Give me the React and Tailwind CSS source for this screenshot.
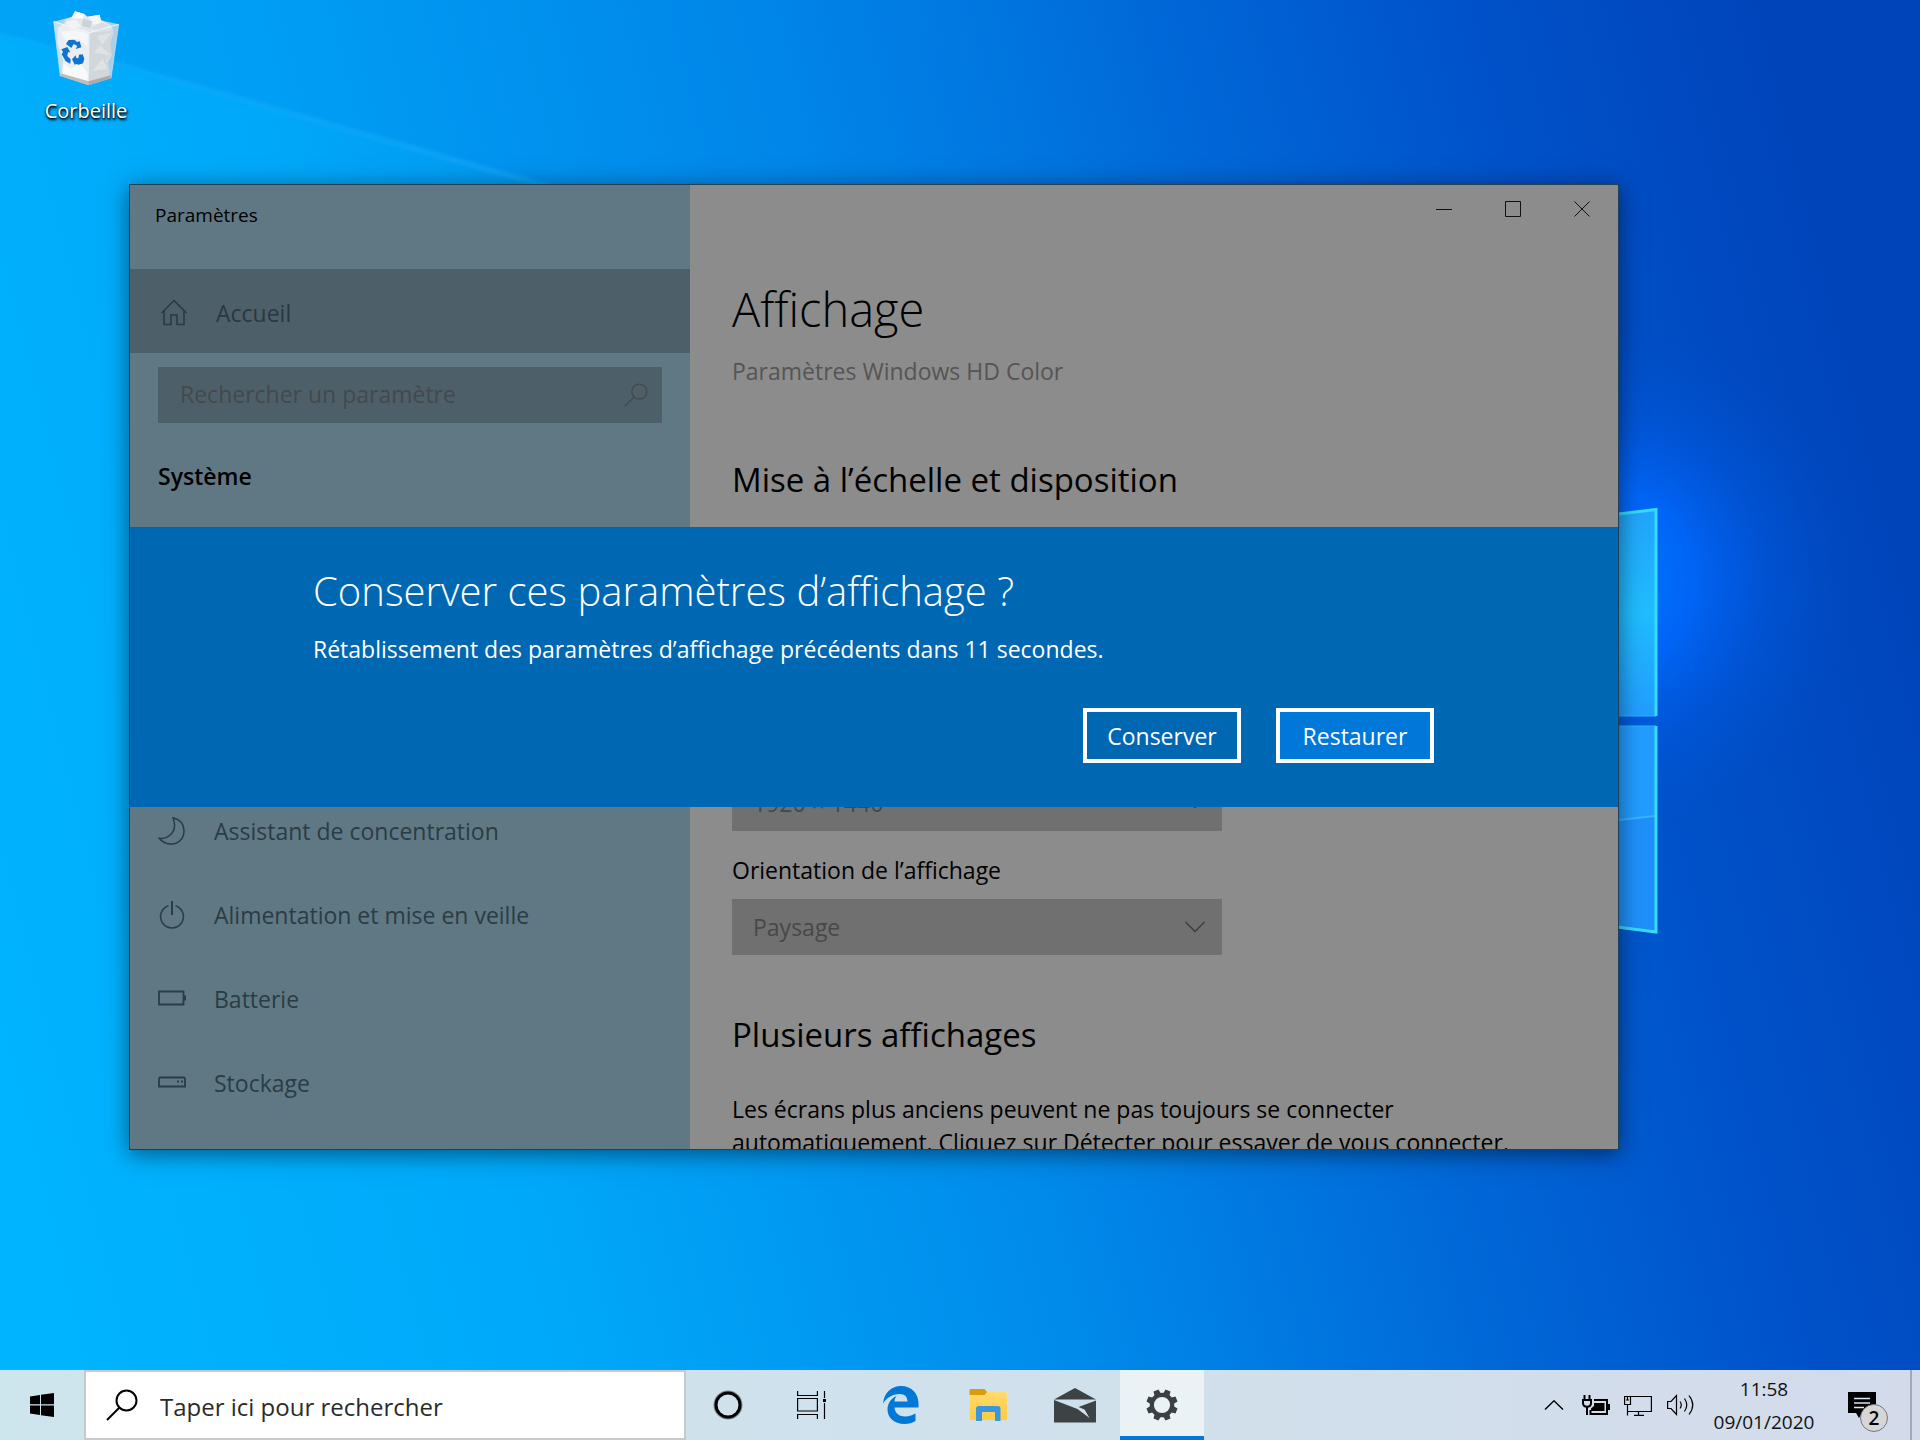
import React from 'react';

const navItems = [
  { label: 'Assistant de concentration', icon: MoonIcon },
  { label: 'Alimentation et mise en veille', icon: PowerIcon },
  { label: 'Batterie', icon: BatteryIcon },
  { label: 'Stockage', icon: StorageIcon },
];

function Wallpaper() {
  return (
    <svg
      className="absolute inset-0 h-full w-full"
      viewBox="0 0 1920 1440"
      preserveAspectRatio="xMaxYMid slice"
      aria-hidden="true"
    >
      <defs>
        <linearGradient id="base" x1="0" y1="1100" x2="1920" y2="620" gradientUnits="userSpaceOnUse">
          <stop offset="0" stopColor="#00b4ff" />
          <stop offset="0.25" stopColor="#00a8f9" />
          <stop offset="0.5" stopColor="#008aea" />
          <stop offset="0.7" stopColor="#0068d8" />
          <stop offset="0.85" stopColor="#0052ca" />
          <stop offset="1" stopColor="#0044ba" />
        </linearGradient>
        <radialGradient id="glow" cx="1600" cy="580" r="260" gradientUnits="userSpaceOnUse">
          <stop offset="0" stopColor="#007cff" />
          <stop offset="0.35" stopColor="#0069ff" stopOpacity="0.85" />
          <stop offset="0.65" stopColor="#005ce8" stopOpacity="0.4" />
          <stop offset="1" stopColor="#0052d0" stopOpacity="0" />
        </radialGradient>
        <linearGradient id="beam" x1="0" y1="30" x2="640" y2="190" gradientUnits="userSpaceOnUse">
          <stop offset="0" stopColor="#2ab4ff" stopOpacity="0.15" />
          <stop offset="0.5" stopColor="#2ab4ff" stopOpacity="0.35" />
          <stop offset="1" stopColor="#2ab4ff" stopOpacity="0.6" />
        </linearGradient>
        <linearGradient id="paneTop" x1="0" y1="510" x2="0" y2="716" gradientUnits="userSpaceOnUse">
          <stop offset="0" stopColor="#22a4fb" />
          <stop offset="0.5" stopColor="#20bdff" />
          <stop offset="1" stopColor="#229dff" />
        </linearGradient>
        <filter id="soft" x="-10%" y="-10%" width="120%" height="120%">
          <feGaussianBlur stdDeviation="2" />
        </filter>
      </defs>
      <rect width="1920" height="1440" fill="url(#base)" />
      <path d="M-20 30L90 56L560 190H1100L860 -20H-20Z" fill="#0078e4" opacity="0.18" filter="url(#soft)" />
      <path d="M-20 30L90 56L560 190" fill="none" stroke="url(#beam)" strokeWidth="4" filter="url(#soft)" />
      <rect x="1300" y="300" width="620" height="560" fill="url(#glow)" />
      <path d="M1500 528L1656 509V716H1500Z" fill="url(#paneTop)" />
      <path d="M1500 726H1656V933L1500 912Z" fill="#229dff" />
      <path d="M1600 823L1656 816V933L1600 926Z" fill="#1f90fa" />
      <path d="M1600 822L1655 816" stroke="#36b4ff" strokeWidth="2" />
      <path d="M1600 716H1656M1600 726H1656" stroke="#2cb4fb" strokeWidth="1" />
      <path d="M1500 528L1656 509.500V716M1656 726V932L1500 912" fill="none" stroke="#34dcfd" strokeWidth="3" />
    </svg>
  );
}

function RecycleBinIcon() {
  return (
    <svg className="h-[77px] w-[68px]" viewBox="155 30 204 231" aria-hidden="true">
      <path d="M160 65L232 46L355 73L332 235L265 256L180 228Z" fill="#a9d3ec" />
      <path d="M172 84L196 66L192 60L214 52L224 34L252 42L262 50L298 44L302 60L326 72L334 78L340 100L328 128L334 166L322 186L328 232L265 252L184 226L188 180L172 130Z" fill="#e4e7ea" />
      <path d="M224 34L252 42L248 56L214 54Z" fill="#fafbfc" />
      <path d="M262 50L298 44L302 68L280 74Z" fill="#f4f5f7" />
      <path d="M248 56L276 64L270 84L244 78Z" fill="#cdd2d8" />
      <path d="M196 66L226 58L244 80L210 86Z" fill="#f1f3f5" />
      <path d="M272 84L302 68L326 76L300 92Z" fill="#dadee3" />
      <path d="M268 98L340 92L330 128L334 166L316 180L328 210L326 230L266 250Z" fill="#d9dcdf" />
      <path d="M290 108L334 98L306 134ZM280 158L300 136L330 166ZM276 214L306 178L322 206Z" fill="#e9ebed" />
      <path d="M190 190L214 206L240 188L262 220V248L188 224Z" fill="#f6f7f8" />
      <path d="M180 96L220 90L262 100L262 140L236 118L196 120Z" fill="#f2f4f6" />
      <path d="M181 220L265 244L331 226L332 235L265 256L180 228Z" fill="#a7a3a3" />
      <path d="M160 65L268 98L265 256L180 228Z" fill="#ffffff" opacity="0.28" />
      <path d="M268 98L355 73L332 235L265 256Z" fill="#b8c4cc" opacity="0.2" />
      <path d="M160 65L268 98L355 73" fill="none" stroke="#eef9ff" strokeWidth="3" />
      <path d="M160 65L180 228M355 73L332 235" fill="none" stroke="#c4e6f8" strokeWidth="2" />
      {/* three recycling arrows */}
      <g fill="#0f74d0">
        <path d="M197 132L205 120L222 119L230 126L238 124L243 142L226 147L231 138L220 132L213 144Z" />
        <path d="M183 148L201 141L210 157L203 157L201 168L211 178L210 191L196 184L184 163L188 156Z" />
        <path d="M215 178L226 166L228 174L234 175L236 164L247 163L252 176L248 190L235 194L226 191L224 196Z" />
      </g>
    </svg>
  );
}

function HomeIcon() {
  return (
    <svg className="h-7 w-7" viewBox="0 0 28 28" fill="none" stroke="currentColor" strokeWidth="1.500" aria-hidden="true">
      <path d="M1.500 14L14 1.500L26.500 14M4 12V25.500H11V16H17V25.500H24V12" />
    </svg>
  );
}

function MoonIcon() {
  return (
    <svg className="h-7 w-7" viewBox="0 0 28 28" fill="none" stroke="currentColor" strokeWidth="1.500" aria-hidden="true">
      <path d="M15 .800C22 2.500 26 7.500 26 14C26 21.500 20.500 27 13.500 27C8 27 3.500 24.500 1.200 21.200C9 23 17 16 16.500 8C16.400 5 15.800 2.800 15 .800Z" />
    </svg>
  );
}

function PowerIcon() {
  return (
    <svg className="h-7 w-7" viewBox="0 0 28 28" fill="none" stroke="currentColor" strokeWidth="1.600" aria-hidden="true">
      <path d="M14 0V14" strokeWidth="2" />
      <path d="M10.500 4.800A11.400 11.400 0 1 0 17.500 4.800" />
    </svg>
  );
}

function BatteryIcon() {
  return (
    <svg className="h-7 w-7" viewBox="0 0 28 28" fill="none" stroke="currentColor" strokeWidth="1.800" aria-hidden="true">
      <path d="M1 6.500H25.500V19.500H1Z" />
      <path d="M27 10.500V15.500" strokeWidth="2" />
    </svg>
  );
}

function StorageIcon() {
  return (
    <svg className="h-7 w-7" viewBox="0 0 28 28" fill="none" stroke="currentColor" strokeWidth="1.800" aria-hidden="true">
      <path d="M1 9.500L2 8.500H26L27 9.500V17.500H1Z" />
      <path d="M19 12.500H21M23 12.500H25" strokeWidth="2" />
    </svg>
  );
}

function SearchIcon({ className, strokeWidth }) {
  return (
    <svg className={className} viewBox="0 0 32 32" fill="none" stroke="currentColor" strokeWidth={strokeWidth} aria-hidden="true">
      <circle cx="20.500" cy="11.500" r="10" />
      <path d="M13.500 18.500L1 31" />
    </svg>
  );
}

function ComboBox({ id, label, value }) {
  return (
    <div className="relative w-[490px] max-w-full">
      <select
        id={id}
        aria-label={label}
        defaultValue={value}
        className="block h-14 w-full appearance-none bg-[#707070] px-[21px] text-[23px] text-[#484848]"
      >
        <option>{value}</option>
      </select>
      <svg
        className="pointer-events-none absolute top-[22px] right-[17px] h-3 w-5"
        viewBox="0 0 20 12"
        fill="none"
        stroke="#3c3c3c"
        strokeWidth="1.300"
        aria-hidden="true"
      >
        <path d="M.500 1L10 10.500L19.500 1" />
      </svg>
    </div>
  );
}

function Sidebar() {
  return (
    <aside className="flex w-[560px] shrink-0 flex-col bg-[#607883] text-[23px] text-[#2a3c46]">
      <div className="h-[84px] pt-4 pl-[25px] text-[19px] leading-7 text-black">Paramètres</div>
      <button type="button" className="flex h-[84px] shrink-0 items-center gap-7 bg-[#4d5f69] pt-1 pl-[30px] text-[#2b3840]">
        <HomeIcon />
        <span>Accueil</span>
      </button>
      <div className="mx-7 mt-[14px] flex h-14 shrink-0 items-center bg-[#4d6069] pr-[14px] pl-[22px] text-[#43494c]">
        <input
          id="setting-search"
          type="text"
          aria-label="Rechercher un paramètre"
          placeholder="Rechercher un paramètre"
          className="h-full min-w-0 flex-1 bg-transparent pb-0.5 outline-none placeholder:text-[#43494c]"
        />
        <SearchIcon className="h-6 w-6" strokeWidth="1.800" />
      </div>
      <h2 className="mx-7 mt-[37px] leading-8 font-semibold text-black">Système</h2>
      <nav className="mt-[297px]">
        {navItems.map(({ label, icon: Icon }) => (
          <a key={label} href="#" className="flex h-[84px] items-center gap-7 pl-7">
            <Icon />
            <span>{label}</span>
          </a>
        ))}
      </nav>
    </aside>
  );
}

function CaptionButtons() {
  return (
    <div className="flex h-12 justify-end pr-0.5">
      <button type="button" aria-label="Réduire" className="flex w-[69px] items-center justify-center">
        <svg className="h-4 w-4" viewBox="0 0 16 16" stroke="#111" aria-hidden="true"><path d="M0 8.500H16" /></svg>
      </button>
      <button type="button" aria-label="Agrandir" className="flex w-[69px] items-center justify-center">
        <svg className="h-4 w-4" viewBox="0 0 16 16" fill="none" stroke="#111" aria-hidden="true"><path d="M.500.500H15.500V15.500H.500Z" /></svg>
      </button>
      <button type="button" aria-label="Fermer" className="flex w-[69px] items-center justify-center">
        <svg className="h-4 w-4" viewBox="0 0 16 16" stroke="#111" aria-hidden="true"><path d="M.500.500L15.500 15.500M15.500.500L.500 15.500" /></svg>
      </button>
    </div>
  );
}

function ConfirmDialog() {
  return (
    <div role="dialog" aria-labelledby="confirm-title" className="absolute inset-x-0 top-[342px] bg-[#0067b3] px-[183px] pt-[38px] pb-11 text-white">
      <h2 id="confirm-title" className="text-[40px] leading-[52px] font-light">
        Conserver ces paramètres d’affichage ?
      </h2>
      <p className="mt-4 text-[23px] leading-8">
        Rétablissement des paramètres d’affichage précédents dans 11 secondes.
      </p>
      <div className="mt-[43px] flex justify-end gap-[35px] pr-px text-[23px]">
        <button type="button" className="h-[55px] w-[158px] border-4 border-white pt-0.5">Conserver</button>
        <button type="button" className="h-[55px] w-[158px] border-4 border-white bg-[#0078d9] pt-0.5">Restaurer</button>
      </div>
    </div>
  );
}

function SettingsWindow() {
  return (
    <section
      aria-label="Paramètres"
      className="absolute top-[184px] right-[301px] bottom-[220px] left-[129px] flex overflow-hidden border border-[#1f4058] shadow-[0_4px_22px_rgba(0,0,0,0.5)]"
    >
      <Sidebar />
      <main className="min-w-0 flex-1 bg-[#8c8c8c] text-black">
        <CaptionButtons />
        <div className="pr-[84px] pl-[42px]">
          <h1 className="mt-[46px] text-[47px] leading-[60px] font-light">Affichage</h1>
          <p className="mt-4 text-[23px] leading-8 text-[#555]">Paramètres Windows HD Color</p>
          <h2 className="mt-[71px] text-[33px] leading-[44px]">Mise à l’échelle et disposition</h2>
          <div className="mt-[273px]">
            <ComboBox id="resolution" label="Résolution" value="1920 × 1440" />
          </div>
          <label htmlFor="orientation" className="mt-[23px] mb-[13px] block text-[23px] leading-8">
            Orientation de l’affichage
          </label>
          <ComboBox id="orientation" value="Paysage" />
          <h2 className="mt-[58px] text-[33px] leading-[44px]">Plusieurs affichages</h2>
          <p className="mt-9 text-[23px] leading-[33px]">
            Les écrans plus anciens peuvent ne pas toujours se connecter
            <br />
            automatiquement. Cliquez sur Détecter pour essayer de vous connecter.
          </p>
        </div>
      </main>
      <ConfirmDialog />
    </section>
  );
}

function TaskButton({ label, active, children }) {
  return (
    <button
      type="button"
      aria-label={label}
      className={
        active
          ? 'flex h-full w-[84px] items-center justify-center border-b-4 border-[#0078d7] bg-[#ebf2f6] pt-1'
          : 'flex h-full w-[84px] items-center justify-center'
      }
    >
      {children}
    </button>
  );
}

function EdgeIcon() {
  return (
    <svg className="h-[38px] w-9" viewBox="0 0 36 38" fill="#0078d7" aria-hidden="true">
      <path d="M0 17.500C1 7 8.500 0 18 0C29 0 35.500 8 35.500 17.500V21.500H11.500C12 27.500 16.500 30.500 22 30.500C26.500 30.500 30 29 32.500 27.500V35C29.500 37 25.500 38 21.500 38C11 38 4.500 31.500 4.500 23.500C4.500 17.500 8 12.500 13.500 10C12 12 11.500 14 11.500 15.500H24.500C24.500 11 22 8 16.500 8C9.500 8 3.500 12 0 17.500Z" />
    </svg>
  );
}

function FolderIcon() {
  return (
    <svg className="h-8 w-[38px]" viewBox="0 0 38 32" aria-hidden="true">
      <defs>
        <linearGradient id="folder" x1="0" y1="0" x2="0" y2="1">
          <stop offset="0" stopColor="#ffdc74" />
          <stop offset="1" stopColor="#ffcb3f" />
        </linearGradient>
      </defs>
      <path d="M1 0H16L19 3H36.500Q38 3 38 4.500V30Q38 31 37 31H2Q1 31 1 30Z" fill="url(#folder)" />
      <path d="M1.500 0H15.500L18 3L15.500 6H0.500V1Z" fill="#dc9a0d" />
      <path d="M7 32V19.500Q7 17 9.500 17H29Q31.500 17 31.500 19.500V32H26V24Q26 23 25 23H14Q13 23 13 24V32Z" fill="#3a97dd" />
    </svg>
  );
}

function MailIcon() {
  return (
    <svg className="h-9 w-[42px]" viewBox="0 0 42 36" fill="#3d4345" aria-hidden="true">
      <path d="M0 12.500L21 1L42 12.500Z" />
      <path d="M0 13L23.500 22L35.500 31L30.500 22.500L24.500 20L42 13.500V35.500H0Z" />
    </svg>
  );
}

function GearIcon() {
  return (
    <svg className="h-8 w-8" viewBox="0 0 32 32" fill="none" stroke="#3d4043" aria-hidden="true">
      <circle cx="16" cy="16" r="10.200" strokeWidth="4.200" />
      <g fill="#3d4043" stroke="none">
        {[22.5, 67.5, 112.5, 157.5, 202.5, 247.5, 292.5, 337.5].map((angle) => (
          <path key={angle} d="M12.500 6L13.300 .300H18.700L19.500 6Z" transform={`rotate(${angle} 16 16)`} />
        ))}
      </g>
    </svg>
  );
}

function Tray() {
  return (
    <div className="ml-auto flex h-full items-center">
      <button type="button" aria-label="Afficher les icônes cachées" className="mr-[18px]">
        <svg className="h-[10px] w-5" viewBox="0 0 20 10" fill="none" stroke="#000" strokeWidth="1.400" aria-hidden="true">
          <path d="M1 9.500L10 .800L19 9.500" />
        </svg>
      </button>
      <button type="button" aria-label="Batterie en charge" className="mr-[14px]">
        <svg className="h-5 w-7" viewBox="0 0 28 20" fill="none" stroke="#000" aria-hidden="true">
          <path d="M2.500 0V5M7.500 0V5M5 12V20" strokeWidth="2" />
          <path d="M0 5H10M1 5V8C1 13 9 13 9 8V5" strokeWidth="2" />
          <path d="M12 5H25V19H8.500V15" strokeWidth="2" />
          <path d="M12 8H22.500V16H9V13.500L12 11Z" fill="#000" stroke="none" />
          <path d="M27 9V15" strokeWidth="2" />
        </svg>
      </button>
      <button type="button" aria-label="Réseau" className="mr-[15px]">
        <svg className="h-[21px] w-7" viewBox="0 0 28 21" fill="none" stroke="#000" strokeWidth="1.200" aria-hidden="true">
          <path d="M7 1.500H27.400V16.500H3.500M3.500 9.500V20.500M.600 1.500H6.500V9.500H.600ZM3.500 1.500V5.500M2 5H5M14.500 16.500V20M10 20.300H20" />
        </svg>
      </button>
      <button type="button" aria-label="Volume" className="mr-[17px]">
        <svg className="h-[22px] w-7" viewBox="0 0 28 22" fill="none" stroke="#000" strokeWidth="1.200" aria-hidden="true">
          <path d="M.600 7.500H4L9.500 1.500V20.500L4 14.500H.600Z" />
          <path d="M13 7.500Q15.500 11 13 14.500M17.500 4.500Q22 11 17.500 17.500M22 1.500Q29.500 11 22 20.500" />
        </svg>
      </button>
      <div className="flex w-[104px] flex-col items-center pt-0.5 text-[19px] leading-[33px] text-[#111]">
        <span>11:58</span>
        <span>09/01/2020</span>
      </div>
      <button type="button" aria-label="Notifications" className="relative ml-8 h-[26px] w-7">
        <svg className="h-[26px] w-7" viewBox="0 0 28 26" aria-hidden="true">
          <path d="M0 0H28V21H14L11 26L8 21H0Z" fill="#000" />
          <path d="M6 6.500H22M6 11H22M6 15.500H16" stroke="#dde5ee" strokeWidth="1.500" />
        </svg>
        <span className="absolute top-[12px] left-[12px] flex h-7 w-7 items-center justify-center rounded-full border border-[#777] bg-[#d6d6d6] text-[19px] font-semibold text-black">
          2
        </span>
      </button>
      <button type="button" aria-label="Afficher le Bureau" className="ml-[34px] h-full w-[10px] border-l-2 border-[#9fabb8]" />
    </div>
  );
}

function Taskbar() {
  return (
    <footer className="relative flex h-[70px] shrink-0 items-center bg-linear-to-r from-[#cde5ec] via-[#d0e1ec] to-[#d3dbeb]">
      <TaskButton label="Démarrer">
        <svg className="h-6 w-6" viewBox="0 0 24 24" aria-hidden="true">
          <path d="M0 3.500L10 2V11.300H0ZM11 1.800L24 0V11.300H11ZM0 12.400H10V22L0 20.500ZM11 12.400H24V24L11 22.200Z" />
        </svg>
      </TaskButton>
      <div className="flex h-full w-[602px] items-center gap-[22px] border-2 border-[#c6cacc] bg-white pl-5">
        <SearchIcon className="h-8 w-8 shrink-0" strokeWidth="2" />
        <input
          id="taskbar-search"
          type="text"
          aria-label="Taper ici pour rechercher"
          placeholder="Taper ici pour rechercher"
          className="h-full min-w-0 flex-1 pt-0.5 text-[24px] outline-none placeholder:text-[#2b2b2b]"
        />
      </div>
      <TaskButton label="Cortana">
        <svg className="h-[30px] w-[30px]" viewBox="0 0 30 30" fill="none" aria-hidden="true">
          <circle cx="15" cy="15" r="13.500" stroke="#7d8990" strokeWidth="2" />
          <circle cx="15" cy="15" r="12" stroke="#000" strokeWidth="3" />
        </svg>
      </TaskButton>
      <TaskButton label="Affichage des tâches">
        <svg className="h-7 w-[30px]" viewBox="0 0 30 28" fill="none" stroke="#000" strokeWidth="1.200" aria-hidden="true">
          <path d="M.600 0V4.500H20.400V0M.600 7.500H20.400V20H.600ZM.600 28V23.500H20.400V28M27.500 0V7M27.500 12V28" />
          <path d="M26 8H29V11H26Z" fill="#000" stroke="none" />
        </svg>
      </TaskButton>
      <div className="ml-[5px] flex h-full gap-[3px]">
        <TaskButton label="Microsoft Edge"><EdgeIcon /></TaskButton>
        <TaskButton label="Explorateur de fichiers"><FolderIcon /></TaskButton>
        <TaskButton label="Courrier"><MailIcon /></TaskButton>
        <TaskButton label="Paramètres" active><GearIcon /></TaskButton>
      </div>
      <Tray />
    </footer>
  );
}

export default function App() {
  return (
    <div className="relative flex h-screen flex-col overflow-hidden bg-[#0078d7] font-['Open_Sans','Noto_Sans',sans-serif]">
      <Wallpaper />
      <div className="relative min-h-0 flex-1">
        <a href="#" className="absolute top-[10px] left-6 flex w-[124px] flex-col items-center text-[20px] leading-7 text-white [text-shadow:1px_2px_3px_#000,0_1px_2px_#000]">
          <RecycleBinIcon />
          <span className="mt-[10px]">Corbeille</span>
        </a>
        <SettingsWindow />
      </div>
      <Taskbar />
    </div>
  );
}
